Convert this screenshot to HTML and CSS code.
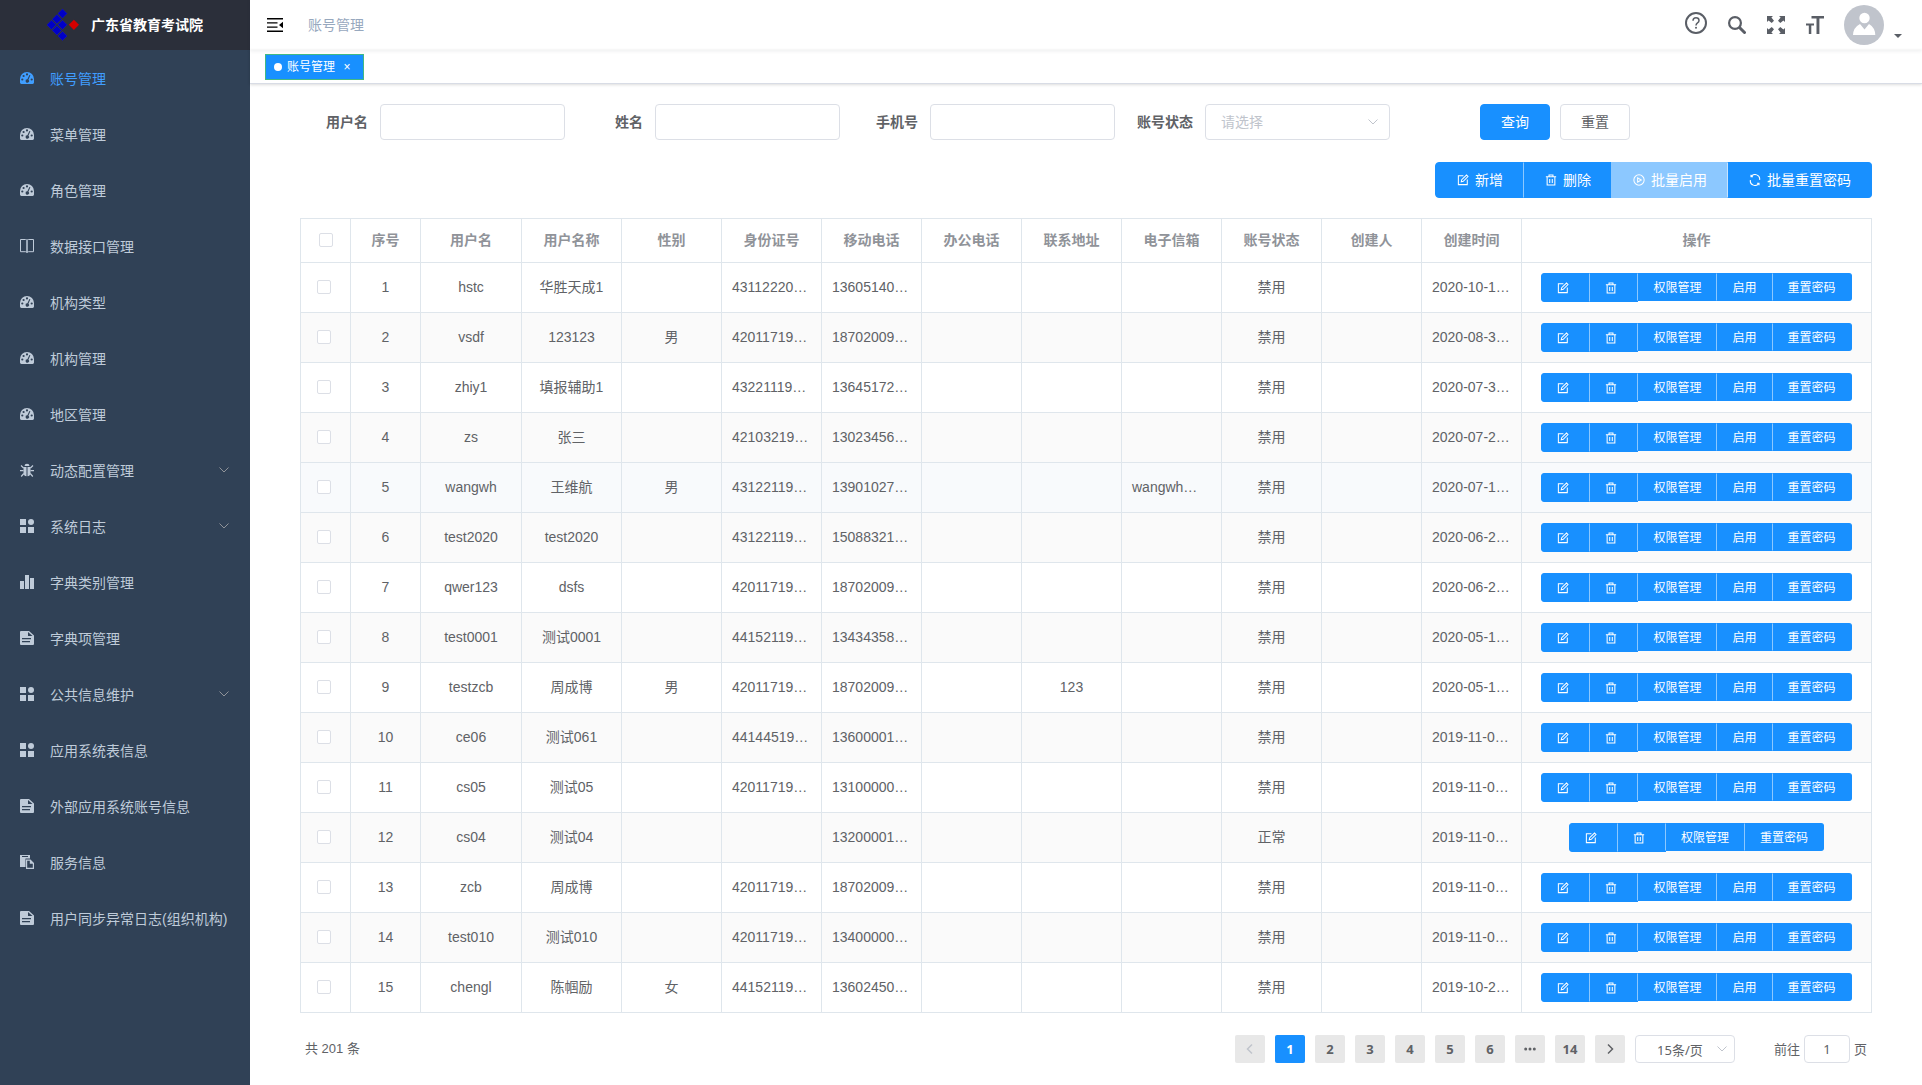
FILE: index.html
```html
<!DOCTYPE html>
<html lang="zh-CN">
<head>
<meta charset="utf-8">
<title>账号管理</title>
<link rel="stylesheet" href="styles.css">
</head>
<body>
<svg class="sprite" aria-hidden="true">
  <symbol id="i-dashboard" viewBox="0 0 14 14"><path fill-rule="evenodd" d="M0 8a7 7 0 0 1 14 0v3.6q0 1.4-1.4 1.4H1.400q-1.400 0-1.400-1.400zM1.200 8.500a1.100 1.100 0 1 0 2.200 0a1.100 1.100 0 1 0-2.200 0zM2.500 5a1.100 1.100 0 1 0 2.200 0a1.100 1.100 0 1 0-2.200 0zM5.900 3.400a1.100 1.100 0 1 0 2.200 0a1.100 1.100 0 1 0-2.200 0zM10.600 8.500a1.100 1.100 0 1 0 2.200 0a1.100 1.100 0 1 0-2.200 0zM9.400 3.900L7.400 8.300a1.700 1.700 0 1 0 1 .4l2-4.400z"/></symbol>
  <symbol id="i-book" viewBox="0 0 14 14"><path fill="none" stroke="currentColor" d="M.5.5h5q1.500 0 1.500 1v12q0-.8-1.500-.8h-5zM13.500.5h-5Q7 .5 7 1.500v12q0-.8 1.500-.8h5z"/></symbol>
  <symbol id="i-bug" viewBox="0 0 14 14"><path d="M4.500 3a2.500 2.300 0 0 1 5 0zM3.500 4h3v9.300Q3.500 13 3.500 9.500zM7.500 4h3v5.500q0 3.500-3 3.800z"/><path fill="none" stroke="currentColor" stroke-width="1.200" d="M1 2.500L3.600 5M13 2.500L10.400 5M0 7.700h3.500M10.500 7.700H14M3.800 10.500L1.200 13.500M10.200 10.500l2.600 3"/></symbol>
  <symbol id="i-grid" viewBox="0 0 14 14"><path d="M0 0h6v6H0zM0 8h6v6H0zM8 8h6v6H8z"/><circle cx="11" cy="3" r="3"/></symbol>
  <symbol id="i-chart" viewBox="0 0 14 14"><path d="M0 6h4v8H0zM5 0h4v14H5zM10 3h4v11h-4z"/></symbol>
  <symbol id="i-doc" viewBox="0 0 14 14"><path fill-rule="evenodd" d="M1 0h8l5 4.500V13q0 1-1 1H1q-1 0-1-1V1q0-1 1-1zM8 1v4h4.500zM2 7v1.200h9V7zM2 10v1.200h8V10z"/></symbol>
  <symbol id="i-paste" viewBox="0 0 14 14"><path fill-rule="evenodd" d="M0 0h10v3.500H5.500V12H0zM2 1v1h6V1z"/><path fill-rule="evenodd" d="M6 4.500h4.500L14 8v6H6zM7.200 5.700v7.100h5.600V8.800H9.800V5.700z"/></symbol>
  <symbol id="i-down" viewBox="0 0 12 12"><path fill="none" stroke="currentColor" d="M1.500 3.500L6 8l4.500-4.500"/></symbol>
  <symbol id="i-fold" viewBox="0 0 16 14"><path d="M0 0h16v1.600H0zM0 4.200h10.500v1.400H0zM0 8.400h10.500v1.400H0zM0 12.400h16V14H0zM16 3.800v6.400L12 7z"/></symbol>
  <symbol id="i-help" viewBox="0 0 22 22"><circle cx="11" cy="11" r="10" fill="none" stroke="currentColor" stroke-width="2"/><path fill="none" stroke="currentColor" stroke-width="1.500" d="M8 8.700q.1-2.900 3-2.900t3 2.600q0 1.400-1.500 2.400-1.500 1-1.500 2.700"/><circle cx="11" cy="15.800" r="1"/></symbol>
  <symbol id="i-search" viewBox="0 0 18 18"><circle cx="7" cy="7" r="5.900" fill="none" stroke="currentColor" stroke-width="2.200"/><path stroke="currentColor" stroke-width="3" stroke-linecap="round" d="M12 12l4.500 4.500"/></symbol>
  <symbol id="i-full" viewBox="0 0 18 18"><path d="M0 0h6L4.400 1.600 7 4.700 4.700 7 1.600 4.400 0 6zM18 0v6l-1.600-1.600L13.300 7 11 4.700l2.600-3.100L12 0zM0 18v-6l1.600 1.600L4.700 11 7 13.300l-2.600 3.100L6 18zM18 18h-6l1.600-1.600-2.600-3.100 2.300-2.300 3.100 2.600L18 12z"/></symbol>
  <symbol id="i-size" viewBox="0 0 18 18"><path d="M5.500 0H18v2.600h-4.600V18h-2.900V2.600h-5zM0 7.500h8v2H5.300V18H2.800V9.500H0z"/></symbol>
  <symbol id="i-edit" viewBox="0 0 14 14"><path fill="none" stroke="currentColor" stroke-width="1.200" d="M7.500 2H1.600v10.400H12V6.500"/><path fill="none" stroke="currentColor" stroke-width="1.200" d="M5 9l.5-2.300 5.600-5.500 1.700 1.700-5.500 5.600z"/></symbol>
  <symbol id="i-trash" viewBox="0 0 14 14"><path fill="none" stroke="currentColor" stroke-width="1.200" d="M1 3.200h12M4.700 3V1.200h4.600V3M2.500 3.200v9.700h9V3.200M5.500 5.700v4.800M8.500 5.700v4.800"/></symbol>
  <symbol id="i-play" viewBox="0 0 14 14"><circle cx="7" cy="7" r="6" fill="none" stroke="currentColor" stroke-width="1.200"/><path fill="none" stroke="currentColor" stroke-width="1.200" d="M5.400 4.500v5L9.700 7z"/></symbol>
  <symbol id="i-refresh" viewBox="0 0 14 14"><path fill="none" stroke="currentColor" stroke-width="1.200" d="M4.600 3.300H2.300V1M2.500 3.200A5.400 5.400 0 0 1 12.400 7M9.400 10.700h2.300V13M11.500 10.800A5.400 5.400 0 0 1 1.600 7"/></symbol>
</svg>

<div class="app">
  <aside class="sidebar">
    <a class="logo" href="#">
      <svg class="logo-mark" viewBox="0 0 32 34" aria-hidden="true">
        <path fill="#0000c8" stroke="#2020e0" stroke-width=".3" d="M15.500 1l4.600 4.600-4.600 4.600-4.600-4.600zM9.900 6.600l4.600 4.600-4.600 4.600-4.600-4.600zM4.500 12.200l4.600 4.600-4.600 4.600L-.1 16.800zM15.500 12.200l4.600 4.600-4.600 4.600-4.600-4.600zM9.900 17.800l4.600 4.600L9.900 27l-4.600-4.600zM15.500 23.400l4.600 4.600-4.600 4.600-4.600-4.600z"/>
        <path fill="#d40000" d="M26.900 11.700l5.100 5.100-5.100 5.100-5.100-5.100z"/>
      </svg>
      <span>广东省教育考试院</span>
    </a>
    <nav class="menu">
      <a class="menu-item active" href="#"><svg class="icon"><use href="#i-dashboard"/></svg><span>账号管理</span></a>
      <a class="menu-item" href="#"><svg class="icon"><use href="#i-dashboard"/></svg><span>菜单管理</span></a>
      <a class="menu-item" href="#"><svg class="icon"><use href="#i-dashboard"/></svg><span>角色管理</span></a>
      <a class="menu-item" href="#"><svg class="icon"><use href="#i-book"/></svg><span>数据接口管理</span></a>
      <a class="menu-item" href="#"><svg class="icon"><use href="#i-dashboard"/></svg><span>机构类型</span></a>
      <a class="menu-item" href="#"><svg class="icon"><use href="#i-dashboard"/></svg><span>机构管理</span></a>
      <a class="menu-item" href="#"><svg class="icon"><use href="#i-dashboard"/></svg><span>地区管理</span></a>
      <a class="menu-item" href="#"><svg class="icon"><use href="#i-bug"/></svg><span>动态配置管理</span><svg class="arrow"><use href="#i-down"/></svg></a>
      <a class="menu-item" href="#"><svg class="icon"><use href="#i-grid"/></svg><span>系统日志</span><svg class="arrow"><use href="#i-down"/></svg></a>
      <a class="menu-item" href="#"><svg class="icon"><use href="#i-chart"/></svg><span>字典类别管理</span></a>
      <a class="menu-item" href="#"><svg class="icon"><use href="#i-doc"/></svg><span>字典项管理</span></a>
      <a class="menu-item" href="#"><svg class="icon"><use href="#i-grid"/></svg><span>公共信息维护</span><svg class="arrow"><use href="#i-down"/></svg></a>
      <a class="menu-item" href="#"><svg class="icon"><use href="#i-grid"/></svg><span>应用系统表信息</span></a>
      <a class="menu-item" href="#"><svg class="icon"><use href="#i-doc"/></svg><span>外部应用系统账号信息</span></a>
      <a class="menu-item" href="#"><svg class="icon"><use href="#i-paste"/></svg><span>服务信息</span></a>
      <a class="menu-item" href="#"><svg class="icon"><use href="#i-doc"/></svg><span>用户同步异常日志(组织机构)</span></a>
    </nav>
  </aside>

  <div class="main">
    <header class="navbar">
      <button class="plain fold" type="button" aria-label="收起菜单"><svg><use href="#i-fold"/></svg></button>
      <span class="crumb">账号管理</span>
      <div class="tools">
        <button class="plain help" type="button" aria-label="帮助"><svg><use href="#i-help"/></svg></button>
        <button class="plain" type="button" aria-label="搜索"><svg><use href="#i-search"/></svg></button>
        <button class="plain" type="button" aria-label="全屏"><svg><use href="#i-full"/></svg></button>
        <button class="plain" type="button" aria-label="字号"><svg><use href="#i-size"/></svg></button>
      </div>
      <button class="plain user" type="button" aria-label="用户">
        <svg class="avatar" viewBox="0 0 40 40"><circle cx="20" cy="20" r="20" fill="#c0c4cc"/><circle cx="20.500" cy="13" r="5.200" fill="#fff"/><path fill="#fff" d="M9 30q.3-7.500 7-11l4.500 5.500L25 19q6 3.500 6.300 11z"/></svg>
        <span class="caret"></span>
      </button>
    </header>

    <div class="tags">
      <a class="tag" href="#"><span class="dot"></span>账号管理<span class="close">×</span></a>
    </div>

    <main class="content">
      <form class="filters">
        <div class="field"><label for="f-user">用户名</label><input id="f-user" type="text"></div>
        <div class="field"><label for="f-name">姓名</label><input id="f-name" type="text"></div>
        <div class="field"><label for="f-phone">手机号</label><input id="f-phone" type="text"></div>
        <div class="field"><label for="f-state">账号状态</label>
          <div class="select"><select id="f-state"><option>请选择</option></select><svg><use href="#i-down"/></svg></div></div>
        <div class="actions">
          <button class="btn primary" type="button">查询</button>
          <button class="btn" type="button">重置</button>
        </div>
      </form>

      <div class="toolbar">
        <div class="group">
          <button class="btn primary" type="button"><svg><use href="#i-edit"/></svg>新增</button>
          <button class="btn primary" type="button"><svg><use href="#i-trash"/></svg>删除</button>
          <button class="btn primary" type="button" disabled><svg><use href="#i-play"/></svg>批量启用</button>
          <button class="btn primary" type="button"><svg><use href="#i-refresh"/></svg>批量重置密码</button>
        </div>
      </div>

      <table class="grid">
        <colgroup><col class="c-check"><col class="c-index"><col class="c-name"><col span="10"><col class="c-ops"></colgroup>
        <thead>
          <tr><th><input type="checkbox" aria-label="全选"></th><th>序号</th><th>用户名</th><th>用户名称</th><th>性别</th><th>身份证号</th><th>移动电话</th><th>办公电话</th><th>联系地址</th><th>电子信箱</th><th>账号状态</th><th>创建人</th><th>创建时间</th><th>操作</th></tr>
        </thead>
        <tbody id="rows"></tbody>
      </table>

      <footer class="pagination">
        <span class="total">共 201 条</span>
        <nav class="pages">
          <button type="button" disabled aria-label="上一页"><svg viewBox="0 0 12 12"><path d="M8 1.500L3.500 6 8 10.500"/></svg></button>
          <button class="current" type="button">1</button>
          <button type="button">2</button>
          <button type="button">3</button>
          <button type="button">4</button>
          <button type="button">5</button>
          <button type="button">6</button>
          <button type="button" aria-label="更多"><svg class="more" viewBox="0 0 12 12"><circle cx="1.700" cy="6" r="1.500"/><circle cx="6" cy="6" r="1.500"/><circle cx="10.300" cy="6" r="1.500"/></svg></button>
          <button type="button">14</button>
          <button type="button" aria-label="下一页"><svg viewBox="0 0 12 12"><path d="M4 1.500L8.500 6 4 10.500"/></svg></button>
        </nav>
        <div class="select size"><select aria-label="每页条数"><option>15条/页</option></select><svg><use href="#i-down"/></svg></div>
        <label class="jump">前往<input type="text" value="1">页</label>
      </footer>
    </main>
  </div>
</div>
<script src="rows.js"></script>
</body>
</html>
```
FILE: styles.css
```css
* { box-sizing: border-box; }

body {
  margin: 0;
  color: #606266;
  background: #fff;
  font: 14px/20px "Liberation Sans", "Noto Sans CJK SC", sans-serif;
}

button, input, select { font: inherit; color: inherit; }
button { cursor: pointer; }
a { color: inherit; text-decoration: none; }
svg { display: block; fill: currentColor; flex: none; }
.sprite { display: none; }

.app { display: flex; min-height: 100vh; }

/* sidebar */
.sidebar { flex: 0 0 250px; background: #304156; color: #bfcbd9; }

.logo {
  display: flex;
  align-items: center;
  justify-content: center;
  gap: 12px;
  height: 50px;
  background: #2b2f3a;
  color: #fff;
  font-weight: 700;
}
.logo-mark { width: 32px; height: 34px; }

.menu-item {
  display: flex;
  align-items: center;
  gap: 16px;
  height: 56px;
  padding: 0 20px;
  white-space: nowrap;
}
.menu-item span { padding-top: 2px; }
.menu-item.active { color: #409eff; }
.icon { width: 14px; height: 14px; }
.arrow { width: 12px; height: 12px; margin-left: auto; color: #909399; }

/* top bar */
.main { flex: 1; min-width: 0; }

.navbar {
  display: flex;
  align-items: center;
  height: 50px;
  padding: 0 20px 0 17px;
  box-shadow: 0 1px 4px rgba(0, 21, 41, .08);
}
.plain { padding: 0; border: 0; background: none; color: #5a5e66; }
.fold { color: #000; }
.fold svg { width: 16px; height: 14px; }
.crumb { margin-left: 25px; color: #97a8be; }

.tools { display: flex; align-items: flex-end; gap: 21px; height: 18px; margin-left: auto; }
.tools svg { width: 18px; height: 18px; }
.tools .help svg { width: 22px; height: 22px; }
.user { display: flex; align-items: flex-end; gap: 10px; margin-left: 20px; }
.avatar { width: 40px; height: 40px; }
.caret {
  margin-bottom: 7px;
  border: 4px solid transparent;
  border-top-color: #5a5e66;
  border-bottom: 0;
}

.tags {
  display: flex;
  align-items: center;
  height: 34px;
  padding: 0 15px;
  border-bottom: 1px solid #d8dce5;
  box-shadow: 0 1px 3px rgba(0, 0, 0, .12), 0 0 3px rgba(0, 0, 0, .04);
}
.tag {
  display: flex;
  align-items: center;
  height: 26px;
  padding: 1px 8px 0;
  border: 1px solid #42b983;
  background: #1890ff;
  color: #fff;
  font-size: 12px;
}
.dot { width: 8px; height: 8px; margin-right: 5px; border-radius: 50%; background: #fff; }
.close { width: 16px; margin-left: 4px; text-align: center; }

/* filters */
.content { padding: 20px 50px; }

.filters { display: flex; flex-wrap: wrap; gap: 10px; }
.field { display: flex; align-items: center; }
.field label { flex: none; width: 80px; padding-right: 12px; text-align: right; font-weight: 700; }
input[type="text"], select {
  width: 185px;
  height: 36px;
  padding: 0 15px;
  border: 1px solid #dcdfe6;
  border-radius: 4px;
  background: #fff;
}
.select { position: relative; color: #c0c4cc; }
.select select { display: block; appearance: none; }
.select svg {
  position: absolute;
  top: 50%;
  right: 11px;
  width: 12px;
  height: 12px;
  margin-top: -6px;
  pointer-events: none;
}
.actions { display: flex; gap: 10px; padding-left: 80px; }

/* buttons */
.btn {
  display: flex;
  align-items: center;
  justify-content: center;
  gap: 5px;
  height: 36px;
  padding: 0 20px;
  border: 1px solid #dcdfe6;
  border-radius: 4px;
  background: #fff;
  white-space: nowrap;
}
.btn svg { width: 14px; height: 14px; }
.btn.primary { border-color: #1890ff; background: #1890ff; color: #fff; }
.btn.primary:disabled { border-color: #8cc8ff; background: #8cc8ff; }

.group { display: inline-flex; align-items: flex-start; }
.group .btn { border-radius: 0; }
.group .btn:first-child { border-radius: 4px 0 0 4px; }
.group .btn:last-child { border-radius: 0 4px 4px 0; }
.group .btn + .btn { margin-left: -1px; border-left-color: #8cc8ff; }
.group .btn:disabled + .btn { border-left-color: #c5e3ff; }

.toolbar { display: flex; justify-content: flex-end; margin: 22px 0 20px; }
.toolbar svg { width: 14px; height: 12px; }
.toolbar .btn { gap: 5px; }

/* table */
.grid {
  width: 100%;
  table-layout: fixed;
  border-spacing: 0;
  border: solid #dfe6ec;
  border-width: 1px 0 0 1px;
}
.c-check { width: 50px; }
.c-index { width: 70px; }
.c-name { width: 101px; }
.c-ops { width: 350px; }
.grid th, .grid td {
  height: 50px;
  padding: 0 10px 2px;
  border: solid #dfe6ec;
  border-width: 0 1px 1px 0;
  text-align: center;
  white-space: nowrap;
  overflow: hidden;
}
.grid th { height: 44px; color: #909399; }
.grid td.clipped { text-align: left; }
.grid td:last-child { padding-bottom: 0; }
.grid tbody tr:nth-child(even) { background: #fafafa; }
.grid tbody tr.hovered { background: #f8fafc; }
.grid input {
  display: block;
  appearance: none;
  width: 14px;
  height: 14px;
  margin: 0 auto;
  border: 1px solid #dcdfe6;
  border-radius: 2px;
  background: #fff;
}
.grid td input { margin-left: 6px; }
.grid .group { display: flex; justify-content: center; }
.grid .btn {
  height: 28px;
  padding: 1px 15px 0;
  font-size: 12px;
}
.grid .group .btn:first-child { border-radius: 3px 0 0 3px; }
.grid .group .btn:last-child { border-radius: 0 3px 3px 0; }
.grid .btn.square { justify-content: flex-start; width: 49px; height: 29px; padding-top: 0; }
.grid .btn svg { width: 12px; height: 12px; }

/* pagination */
.pagination {
  display: flex;
  align-items: center;
  margin-top: 22px;
  padding: 0 5px;
  font: 13px/28px "Noto Sans", "Noto Sans CJK SC", sans-serif;
}
.total { margin-right: auto; font-family: "Liberation Sans", "Noto Sans CJK SC", sans-serif; }
.pages { display: flex; gap: 10px; }
.pages button {
  display: flex;
  align-items: center;
  justify-content: center;
  width: 30px;
  height: 28px;
  padding: 0 0 1px;
  border: 0;
  border-radius: 2px;
  background: #e8e8e8;
  font-weight: 700;
}
.pages button:disabled { color: #c0c4cc; }
.pages .current { background: #1890ff; color: #fff; }
.pages svg { width: 12px; height: 12px; fill: none; stroke: currentColor; stroke-width: 1.5; }
.pages svg.more { fill: currentColor; stroke: none; }
.size { margin: 0 39px 0 10px; }
.size select {
  width: 100px;
  height: 28px;
  padding: 0 25px 0 15px;
  color: #606266;
  text-align: center;
  text-align-last: center;
}
.size svg { right: 7px; }
.jump { display: flex; align-items: center; gap: 4px; }
.jump input[type="text"] { width: 46px; height: 28px; padding: 0 3px; text-align: center; }
```
FILE: rows.js
```js
// name, display name, gender, id number, mobile, office phone, address, e-mail, state, creator, created
const accounts = [
  ["hstc", "华胜天成1", "", "43112220…", "13605140…", "", "", "", "禁用", "", "2020-10-1…"],
  ["vsdf", "123123", "男", "42011719…", "18702009…", "", "", "", "禁用", "", "2020-08-3…"],
  ["zhiy1", "填报辅助1", "", "43221119…", "13645172…", "", "", "", "禁用", "", "2020-07-3…"],
  ["zs", "张三", "", "42103219…", "13023456…", "", "", "", "禁用", "", "2020-07-2…"],
  ["wangwh", "王维航", "男", "43122119…", "13901027…", "", "", "wangwh…", "禁用", "", "2020-07-1…"],
  ["test2020", "test2020", "", "43122119…", "15088321…", "", "", "", "禁用", "", "2020-06-2…"],
  ["qwer123", "dsfs", "", "42011719…", "18702009…", "", "", "", "禁用", "", "2020-06-2…"],
  ["test0001", "测试0001", "", "44152119…", "13434358…", "", "", "", "禁用", "", "2020-05-1…"],
  ["testzcb", "周成博", "男", "42011719…", "18702009…", "", "123", "", "禁用", "", "2020-05-1…"],
  ["ce06", "测试061", "", "44144519…", "13600001…", "", "", "", "禁用", "", "2019-11-0…"],
  ["cs05", "测试05", "", "42011719…", "13100000…", "", "", "", "禁用", "", "2019-11-0…"],
  ["cs04", "测试04", "", "", "13200001…", "", "", "", "正常", "", "2019-11-0…"],
  ["zcb", "周成博", "", "42011719…", "18702009…", "", "", "", "禁用", "", "2019-11-0…"],
  ["test010", "测试010", "", "42011719…", "13400000…", "", "", "", "禁用", "", "2019-11-0…"],
  ["chengl", "陈帼励", "女", "44152119…", "13602450…", "", "", "", "禁用", "", "2019-10-2…"],
];

const button = (text) => `<button class="btn primary" type="button">${text}</button>`;
const iconButton = (icon, label) =>
  `<button class="btn primary square" type="button" aria-label="${label}"><svg><use href="#${icon}"/></svg></button>`;

document.getElementById("rows").innerHTML = accounts.map((cells, i) => {
  const disabled = cells[8] === "禁用";
  const ops = iconButton("i-edit", "编辑") + iconButton("i-trash", "删除") + button("权限管理") +
    (disabled ? button("启用") : "") + button("重置密码");
  const data = cells.map((c) => `<td${c.endsWith("…") ? ' class="clipped"' : ""}>${c}</td>`).join("");
  return `<tr${i === 4 ? ' class="hovered"' : ""}><td><input type="checkbox" aria-label="选择 ${cells[0]}"></td>` +
    `<td>${i + 1}</td>${data}<td><div class="group">${ops}</div></td></tr>`;
}).join("");
```
